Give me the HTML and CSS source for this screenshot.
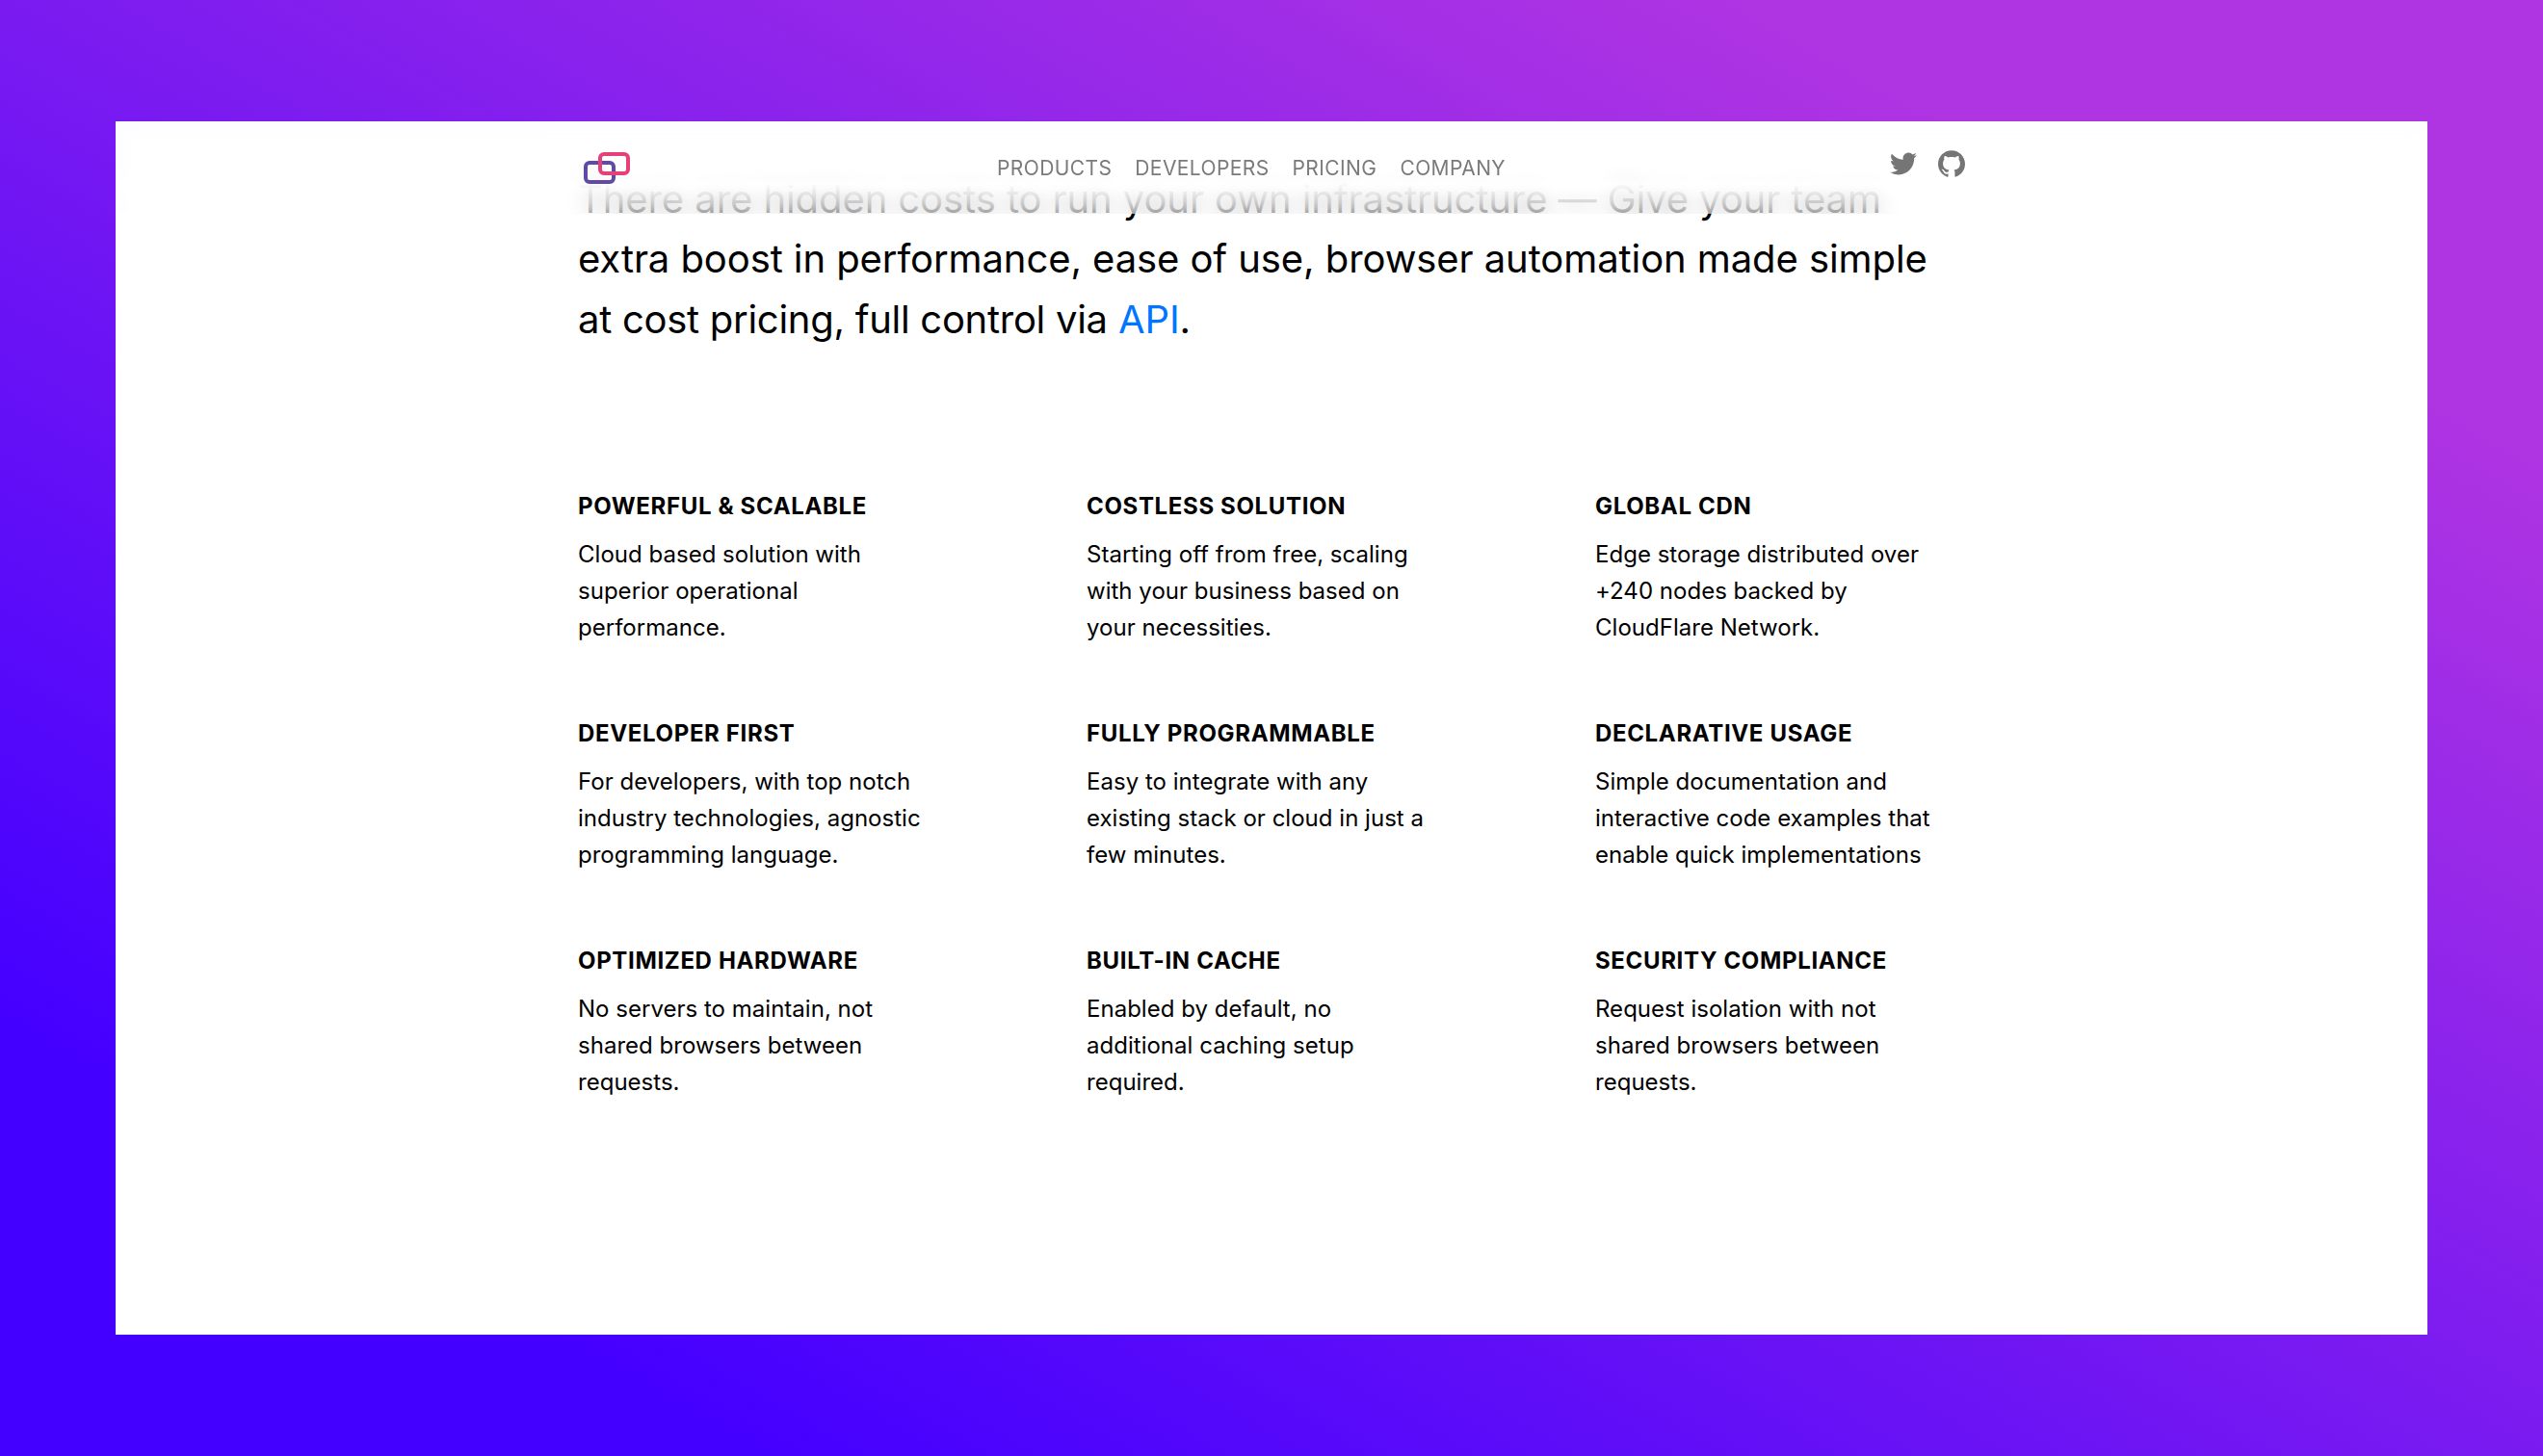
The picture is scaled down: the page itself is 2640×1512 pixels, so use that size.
FILE: index.html
```html
<!DOCTYPE html>
<html lang="en">
<head>
  <meta charset="UTF-8" />
  <title>Browserless</title>
  <link rel="stylesheet" href="styles.css">
</head>
<body>
  <div class="window">
    <header class="nav">
      <a class="logo" href="#">
        <svg width="48" height="36" viewBox="0 0 48 36" fill="none" stroke-width="4">
          <rect x="2" y="13" width="29" height="20" rx="4" stroke="#5f4aa8" />
          <rect x="17" y="4" width="29" height="20" rx="4" stroke="#e5407a" />
        </svg>
      </a>
      <nav class="nav-links">
        <a href="#">PRODUCTS</a>
        <a href="#">DEVELOPERS</a>
        <a href="#">PRICING</a>
        <a href="#">COMPANY</a>
      </nav>
      <div class="nav-icons">
        <svg width="28" height="28" viewBox="0 0 24 24"><path d="M23.953 4.57a10 10 0 01-2.825.775 4.958 4.958 0 002.163-2.723c-.951.555-2.005.959-3.127 1.184a4.92 4.92 0 00-8.384 4.482C7.69 8.095 4.067 6.13 1.64 3.162a4.822 4.822 0 00-.666 2.475c0 1.71.87 3.213 2.188 4.096a4.904 4.904 0 01-2.228-.616v.06a4.923 4.923 0 003.946 4.827 4.996 4.996 0 01-2.212.085 4.936 4.936 0 004.604 3.417 9.867 9.867 0 01-6.102 2.105c-.39 0-.779-.023-1.17-.067a13.995 13.995 0 007.557 2.209c9.053 0 13.998-7.496 13.998-13.985 0-.21 0-.42-.015-.63A9.935 9.935 0 0024 4.59z"/></svg>
        <svg width="28" height="28" viewBox="0 0 24 24"><path d="M12 .297c-6.63 0-12 5.373-12 12 0 5.303 3.438 9.8 8.205 11.385.6.113.82-.258.82-.577 0-.285-.01-1.04-.015-2.04-3.338.724-4.042-1.61-4.042-1.61C4.422 18.07 3.633 17.7 3.633 17.7c-1.087-.744.084-.729.084-.729 1.205.084 1.838 1.236 1.838 1.236 1.07 1.835 2.809 1.305 3.495.998.108-.776.417-1.305.76-1.605-2.665-.3-5.466-1.332-5.466-5.93 0-1.31.465-2.38 1.235-3.22-.135-.303-.54-1.523.105-3.176 0 0 1.005-.322 3.3 1.23.96-.267 1.98-.399 3-.405 1.02.006 2.04.138 3 .405 2.28-1.552 3.285-1.23 3.285-1.23.645 1.653.24 2.873.12 3.176.765.84 1.23 1.91 1.23 3.22 0 4.61-2.805 5.625-5.475 5.92.42.36.81 1.096.81 2.22 0 1.606-.015 2.896-.015 3.286 0 .315.21.69.825.57C20.565 22.092 24 17.592 24 12.297c0-6.627-5.373-12-12-12"/></svg>
      </div>
    </header>

    <main class="content">
      <p class="lede">There are hidden costs to run your own infrastructure — Give your team extra boost in performance, ease of use, browser automation made simple <span class="lede-end">at cost pricing, full control via</span> <a href="#">API</a>.</p>

      <section class="features">
        <div class="feature">
          <h3>POWERFUL &amp; SCALABLE</h3>
          <p>Cloud based solution with<br>superior operational<br>performance.</p>
        </div>
        <div class="feature">
          <h3>COSTLESS SOLUTION</h3>
          <p>Starting off from free, scaling<br>with your business based on<br>your necessities.</p>
        </div>
        <div class="feature">
          <h3>GLOBAL CDN</h3>
          <p>Edge storage distributed over<br>+240 nodes backed by<br>CloudFlare Network.</p>
        </div>
        <div class="feature">
          <h3>DEVELOPER FIRST</h3>
          <p>For developers, with top notch<br>industry technologies, agnostic<br>programming language.</p>
        </div>
        <div class="feature">
          <h3>FULLY PROGRAMMABLE</h3>
          <p>Easy to integrate with any<br>existing stack or cloud in just a<br>few minutes.</p>
        </div>
        <div class="feature">
          <h3>DECLARATIVE USAGE</h3>
          <p>Simple documentation and<br>interactive code examples that<br>enable quick implementations</p>
        </div>
        <div class="feature">
          <h3>OPTIMIZED HARDWARE</h3>
          <p>No servers to maintain, not<br>shared browsers between<br>requests.</p>
        </div>
        <div class="feature">
          <h3>BUILT-IN CACHE</h3>
          <p>Enabled by default, no<br>additional caching setup<br>required.</p>
        </div>
        <div class="feature">
          <h3>SECURITY COMPLIANCE</h3>
          <p>Request isolation with not<br>shared browsers between<br>requests.</p>
        </div>
      </section>
    </main>
  </div>
</body>
</html>
```

FILE: styles.css
```css
* {
  box-sizing: border-box;
}

body {
  margin: 0;
  width: 2640px;
  height: 1512px;
  padding: 126px 120px;
  overflow: hidden;
  font-family: Inter, "Noto Sans", sans-serif;
  color: #000;
  background: linear-gradient(to top right, #4400ff 15%, #b035e2 85%);
}

a {
  color: inherit;
  text-decoration: none;
}

.window {
  position: relative;
  height: 1260px;
  background: #fff;
  overflow: hidden;
}

/* sits over the scrolled text, so it needs its own layer */
.nav {
  position: absolute;
  top: 0;
  left: 0;
  z-index: 1;
  width: 100%;
  height: 96px;
  padding: 30px 480px 0 486px;
  display: flex;
  justify-content: space-between;
  align-items: flex-start;
}

/* half blurred, half sharp: gives the haze around the text underneath */
.nav::before {
  content: "";
  position: absolute;
  inset: 0;
  z-index: -2;
  backdrop-filter: blur(10px);
  -webkit-mask-image: linear-gradient(rgba(0, 0, 0, 0.7), rgba(0, 0, 0, 0.7));
  mask-image: linear-gradient(rgba(0, 0, 0, 0.7), rgba(0, 0, 0, 0.7));
}

.nav::after {
  content: "";
  position: absolute;
  inset: 0;
  z-index: -1;
  background: linear-gradient(to bottom, rgba(255, 255, 255, 0.6) 55%, rgba(255, 255, 255, 0.95) 68%, rgba(255, 255, 255, 0.72) 82%, rgba(255, 255, 255, 0.5));
}

.logo svg {
  display: block;
}

.nav-links {
  display: flex;
  gap: 24px;
  margin-right: 18px;
  padding-top: 3px;
  font-size: 21px;
  line-height: 32px;
  letter-spacing: 0.4px;
  color: #7a7a7a;
}

.nav-icons {
  display: flex;
  gap: 22px;
}

.nav-icons svg {
  display: block;
  fill: #757575;
}

.content {
  padding: 50px 480px 0;
}

.lede {
  margin: 0;
  font-size: 40px;
  line-height: 62.4px;
  letter-spacing: -0.08px;
}

.lede-end {
  letter-spacing: -0.28px;
}

.lede a {
  color: #0076ff;
}

.features {
  margin-top: 144px;
  display: grid;
  grid-template-columns: repeat(3, 528px);
  row-gap: 72px;
}

.feature h3 {
  margin: 0 0 12px;
  font-size: 24px;
  line-height: 38px;
  font-weight: 700;
  letter-spacing: 0.65px;
}

.feature p {
  margin: 0;
  font-size: 24px;
  line-height: 38px;
  letter-spacing: 0.02px;
}
```
